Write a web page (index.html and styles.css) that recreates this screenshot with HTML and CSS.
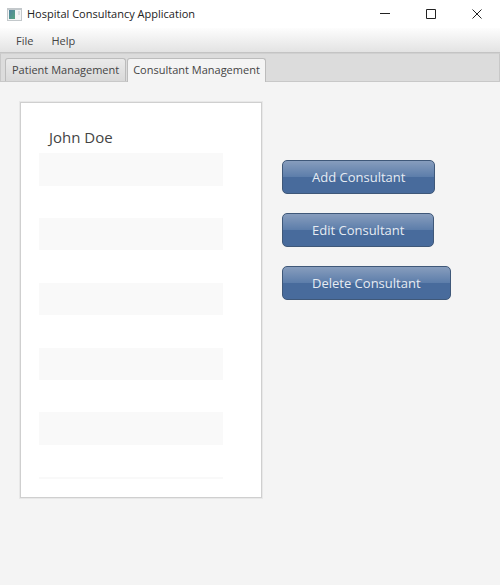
FILE: index.html
```html
<!DOCTYPE html>
<html lang="en">
<head>
<meta charset="utf-8">
<title>Hospital Consultancy Application</title>
<link rel="stylesheet" href="styles.css">
</head>
<body>
<header class="titlebar">
  <svg class="app-icon" width="15" height="13" viewBox="0 0 15 13" aria-hidden="true">
    <defs><linearGradient id="pane" x2="1" y2="1"><stop stop-color="#4f82a0"/><stop offset="1" stop-color="#56a580"/></linearGradient></defs>
    <path fill="#c3c8cb" d="M0 0h15v13H0z"/>
    <path fill="#f3f5f6" d="M1 2h13v10H1z"/>
    <path fill="url(#pane)" d="M2 2h6v9H2z"/>
    <path fill="#d9dfe2" d="M11 3h2v4h-2z"/>
  </svg>
  <h1 class="title">Hospital Consultancy Application</h1>
  <div class="window-controls">
    <button class="window-button" type="button" aria-label="Minimize"><svg width="10" height="10" viewBox="0 0 10 10"><path d="M0 4.500h10"/></svg></button>
    <button class="window-button" type="button" aria-label="Maximize"><svg width="10" height="10" viewBox="0 0 10 10"><path d="M.5.5h9v9h-9z"/></svg></button>
    <button class="window-button" type="button" aria-label="Close"><svg width="10" height="10" viewBox="0 0 10 10"><path d="M.5.5l9 9M9.500.5l-9 9"/></svg></button>
  </div>
</header>
<nav class="menubar">
  <button class="menu" type="button">File</button>
  <button class="menu" type="button">Help</button>
</nav>
<div class="tabs" role="tablist">
  <button class="tab" type="button" role="tab" aria-selected="false">Patient Management</button>
  <button class="tab tab-active" type="button" role="tab" aria-selected="true">Consultant Management</button>
</div>
<main class="content">
  <section class="panel">
    <ul class="list">
      <li class="row">John Doe</li>
      <li class="row"></li>
      <li class="row"></li>
      <li class="row"></li>
      <li class="row"></li>
      <li class="row"></li>
      <li class="row"></li>
      <li class="row"></li>
      <li class="row"></li>
      <li class="row"></li>
      <li class="row"></li>
      <li class="row"></li>
    </ul>
  </section>
  <div class="actions">
    <button class="action" type="button">Add Consultant</button>
    <button class="action" type="button">Edit Consultant</button>
    <button class="action" type="button">Delete Consultant</button>
  </div>
</main>
</body>
</html>
```
FILE: styles.css
```css
* {
  box-sizing: border-box;
}

body {
  margin: 0;
  min-height: 100vh;
  background: #f4f4f4;
  color: #444;
  font: 11px/16px "Open Sans", "Noto Sans", sans-serif;
}

button {
  font: inherit;
  color: inherit;
  border: 0;
  padding: 0;
  background: none;
}

.titlebar {
  display: flex;
  align-items: center;
  gap: 5px;
  height: 28px;
  padding-left: 7px;
  background: #fff;
}

.title {
  flex: 1;
  margin: 0;
  color: #222;
  font-size: 11px;
  font-weight: 400;
}

.window-controls {
  display: flex;
  height: 100%;
}

.window-button {
  display: flex;
  align-items: center;
  justify-content: center;
  width: 46px;
}

.window-button svg {
  fill: none;
  stroke: #222;
}

.menubar {
  display: flex;
  gap: 18px;
  height: 25px;
  padding: 2px 16px 0;
  border-bottom: 1px solid #c4c4c4;
  background: linear-gradient(#fdfdfd, #e3e3e3);
}

.tabs {
  display: flex;
  align-items: flex-end;
  gap: 1px;
  height: 29px;
  padding: 0 4px;
  border: 1px solid #c8c8c8;
  border-top-color: #d0d0d0;
  background: #dcdcdc;
}

.tab {
  height: 23px;
  padding: 0 6px;
  border: 1px solid #bcbcbc;
  border-bottom: 0;
  border-radius: 3px 3px 0 0;
  background: linear-gradient(#eaeaea, #d9d9d9);
  white-space: nowrap;
}

.tab-active {
  height: 24px;
  margin-bottom: -1px;
  padding: 0 5px 1px;
  background: #f4f4f4;
}

.content {
  display: flex;
  gap: 20px;
  padding: 20px;
}

.panel {
  flex: 0 0 242px;
  padding: 18px 38px 18px 18px;
  border: 1px solid #cfcfcf;
  outline: 1px solid #e8e8e8;
  background: #fff;
}

.list {
  display: grid;
  grid-template-rows: repeat(11, 1fr) 2px;
  height: 358px;
  margin: 0;
  padding: 0;
  list-style: none;
}

.row {
  padding: 0 10px;
  color: #444;
  font-size: 15px;
  line-height: 32px;
}

.row:nth-child(even) {
  background: #f9f9f9;
}

.actions {
  display: flex;
  flex-direction: column;
  align-items: flex-start;
  gap: 19px;
  padding-top: 58px;
}

.action {
  height: 34px;
  padding: 0 29px;
  border: 1px solid #3f5879;
  border-radius: 5px;
  background: linear-gradient(#879dbd, #5c7daa 50%, #486b9c 50%, #486b9c);
  color: #e6ebf2;
  font-size: 13px;
  white-space: nowrap;
}
```
